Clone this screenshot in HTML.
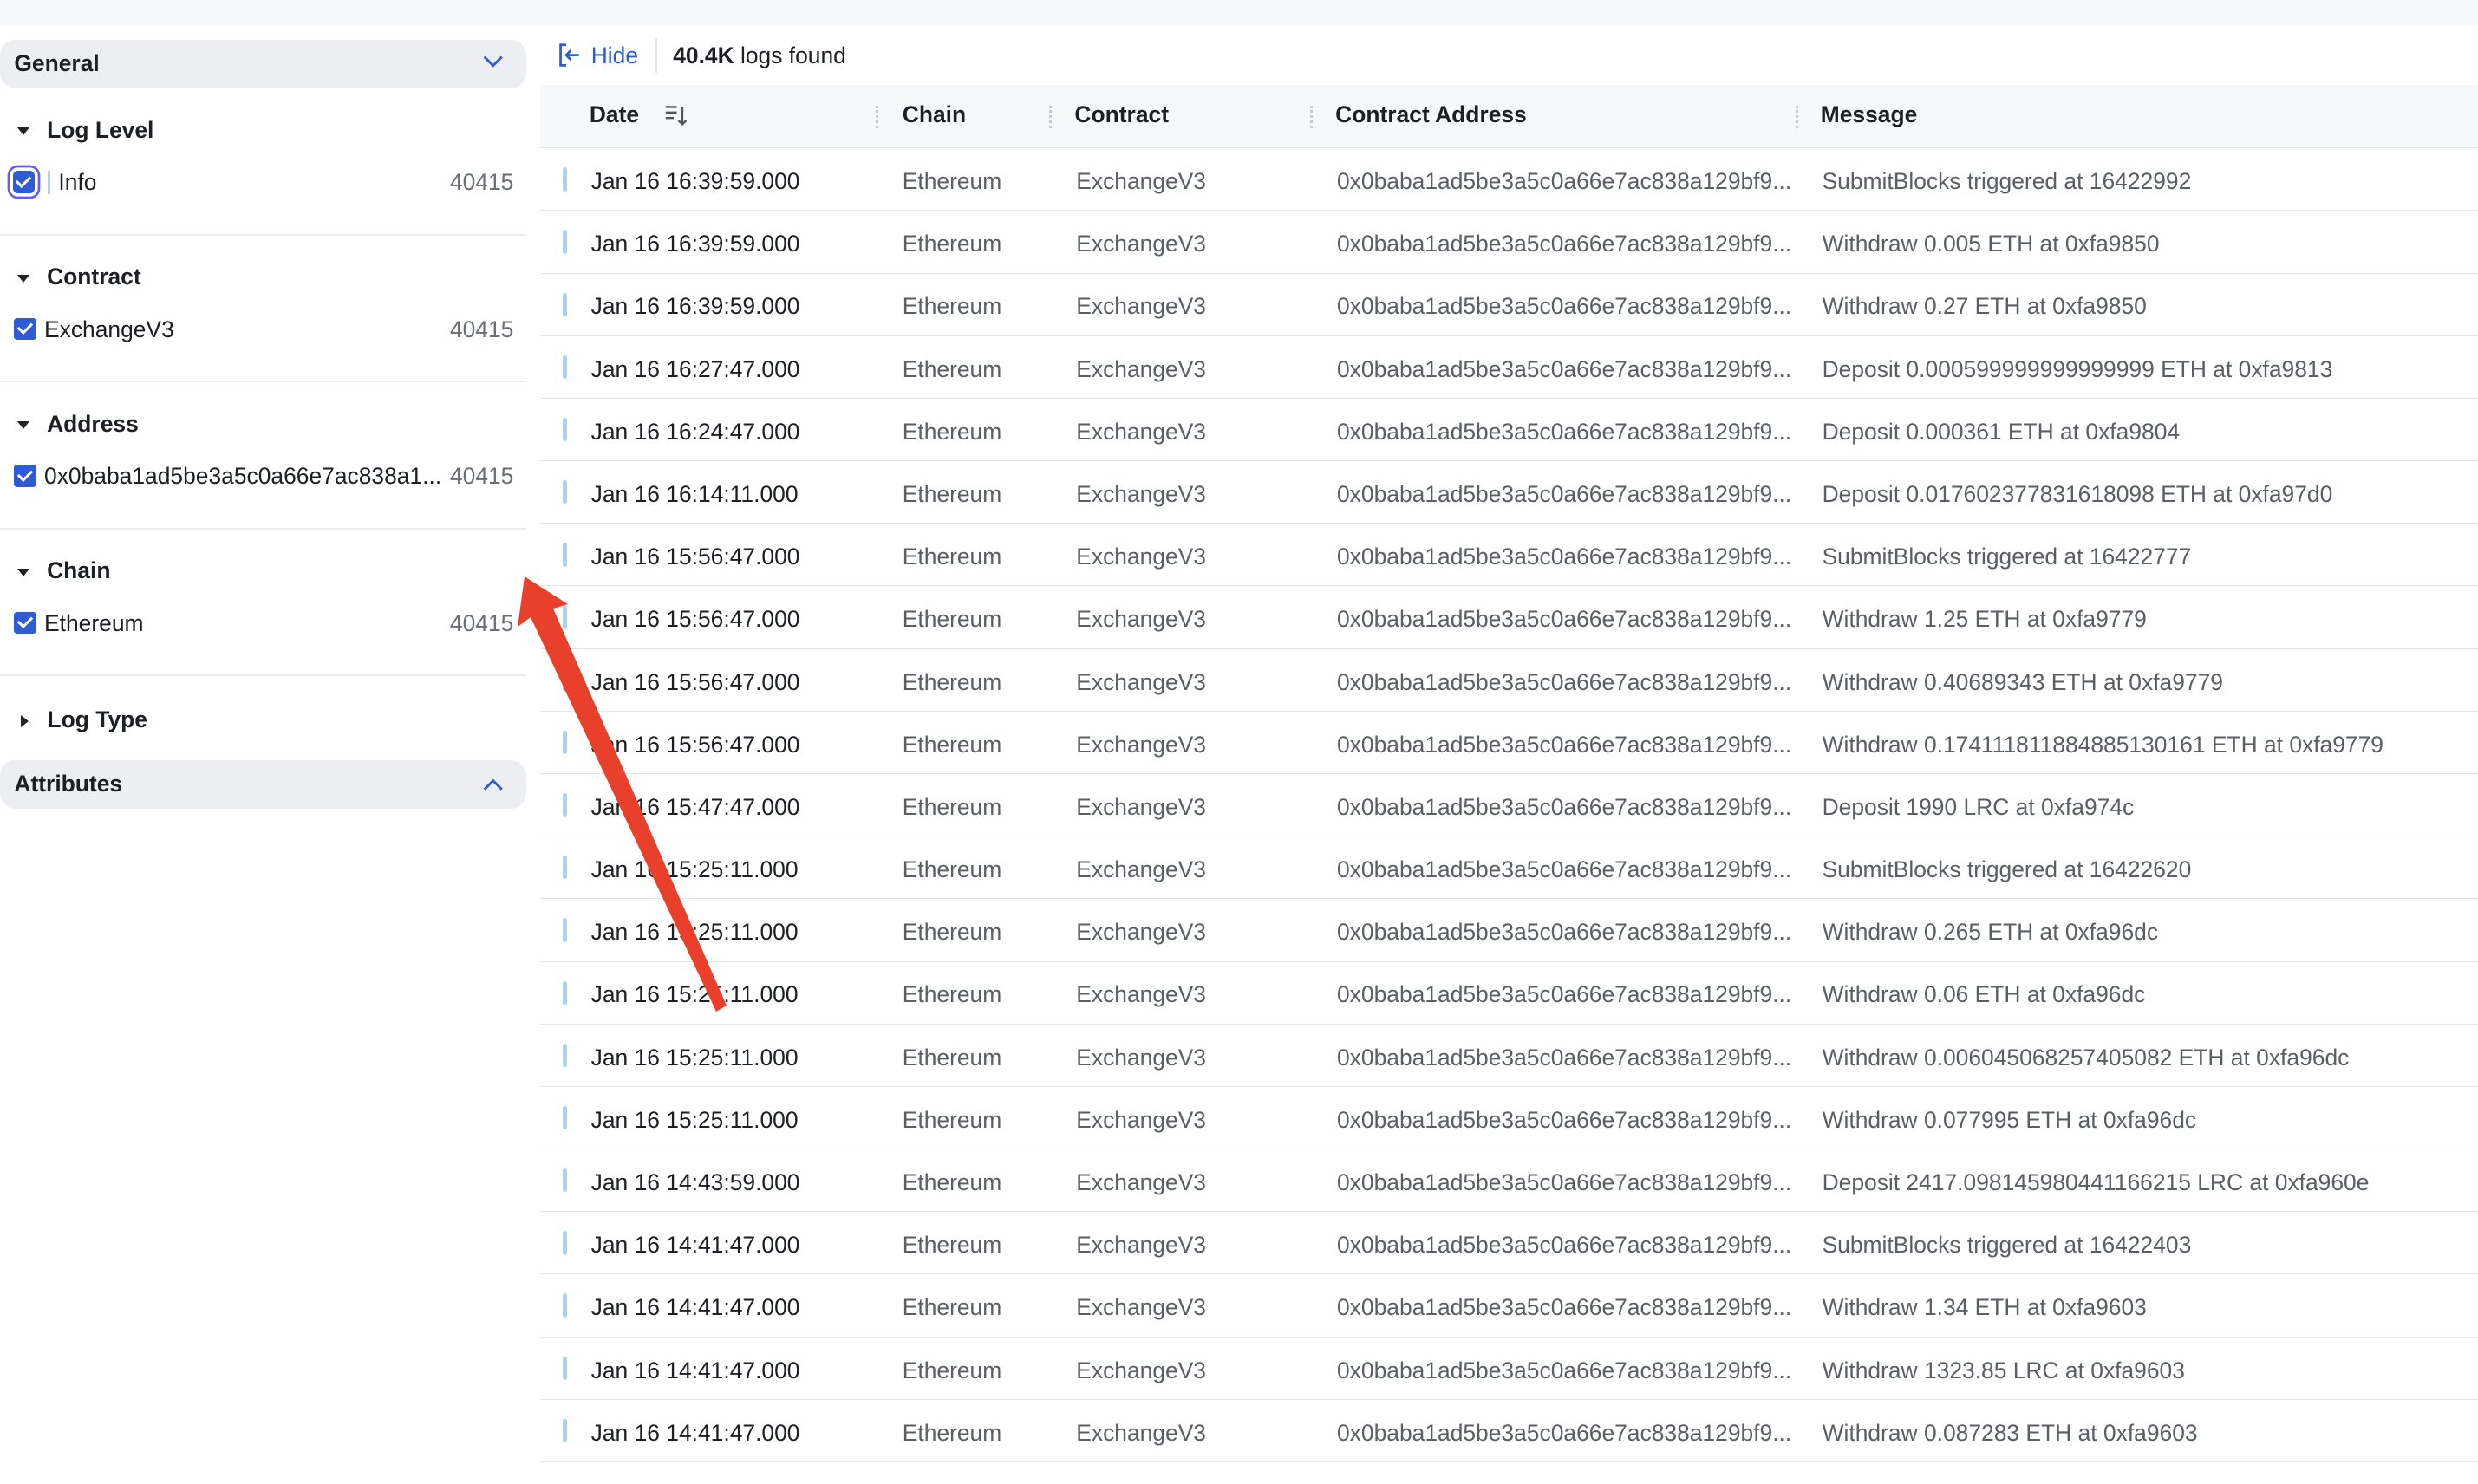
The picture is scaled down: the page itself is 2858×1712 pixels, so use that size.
<!DOCTYPE html>
<html><head><meta charset="utf-8"><style>
*{box-sizing:border-box;margin:0;padding:0}
html,body{width:2858px;height:1710px;overflow:hidden;background:#fff}
#w{position:absolute;left:0;top:0;width:1568px;height:939px;zoom:1.8227;font-family:"Liberation Sans",sans-serif;font-size:14px;color:#1d1f24}
.top{position:absolute;left:0;top:0;width:1568px;height:16px;background:#f7f8fa}
.side{position:absolute;left:0;top:0;width:334px}
.hdr{position:absolute;left:0;width:333px;height:31px;background:#eceef2;border-radius:10px;font-weight:bold;font-size:14.5px;padding:7px 9px}
.chev{position:absolute;right:14px;top:9px}
.sec{position:absolute;left:11px;font-size:14.5px;font-weight:bold;color:#1d1f24}
.sec .tri{display:inline-block;width:0;height:0;border-left:4px solid transparent;border-right:4px solid transparent;border-top:5px solid #222;margin-right:11px;vertical-align:middle}
.sec .tri.r{border-top:4px solid transparent;border-bottom:4px solid transparent;border-left:5px solid #222;border-right:0;margin-left:2px;margin-right:12px}
.item{position:absolute;left:9px;width:316px;font-size:14.5px}
.cb{display:inline-block;width:14px;height:14px;background:#2f5bd3;border-radius:2px;vertical-align:-2px;margin-right:5px;position:relative}
.cb:after{content:"";position:absolute;left:4px;top:1.5px;width:4px;height:7px;border:solid #fff;border-width:0 1.7px 1.7px 0;transform:rotate(45deg)}
.cnt{position:absolute;right:0;top:0;color:#6b6e75}
.div{position:absolute;left:0;width:333px;height:1px;background:#e8ebef}
.th{position:absolute;left:342px;top:54px;width:1226px;height:40px;background:#f7f8fa;border-bottom:1px solid #e3e6ea;font-weight:bold;font-size:14.5px}
.th span{position:absolute;top:10px}
.sep{position:absolute;top:13px;width:2px;height:14px;border-left:2px dotted #c5c8cd}
.row{position:absolute;left:342px;width:1226px;height:39.55px;border-bottom:1px solid #e3e6ea;font-size:14.5px}
.row span{position:absolute;top:12.5px;white-space:nowrap;color:#5b5e64}
.row .d{color:#1d1f24}
.bar{position:absolute;left:14px;top:12px;width:3px;height:15px;background:#a8d4f0;border-radius:2px}
</style></head><body><div id="w">
<div class="top"></div>
<div class="side">
<div class="hdr" style="top:25px">General<svg class="chev" width="14" height="10" viewBox="0 0 14 10"><path d="M1.5 2 L7 7.5 L12.5 2" fill="none" stroke="#2f5bd3" stroke-width="1.6"/></svg></div>
<div class="sec" style="top:74px"><i class="tri"></i>Log Level</div>
<div class="item" style="top:107px"><span class="cb" style="box-shadow:0 0 0 2px #fff,0 0 0 3.5px #6b5de6;border-radius:3px;margin-left:-1px"></span><span style="display:inline-block;width:2px;height:15px;background:#a8d4f0;vertical-align:-3px;margin:0 5px 0 3px"></span>Info<span class="cnt">40415</span></div>
<div class="div" style="top:148px"></div>
<div class="sec" style="top:167px"><i class="tri"></i>Contract</div>
<div class="item" style="top:200px"><span class="cb"></span>ExchangeV3<span class="cnt">40415</span></div>
<div class="div" style="top:241px"></div>
<div class="sec" style="top:260px"><i class="tri"></i>Address</div>
<div class="item" style="top:293px"><span class="cb"></span>0x0baba1ad5be3a5c0a66e7ac838a1...<span class="cnt" style="background:#fff">40415</span></div>
<div class="div" style="top:334px"></div>
<div class="sec" style="top:353px"><i class="tri"></i>Chain</div>
<div class="item" style="top:386px"><span class="cb"></span>Ethereum<span class="cnt">40415</span></div>
<div class="div" style="top:427px"></div>
<div class="sec" style="top:447px"><i class="tri r"></i>Log Type</div>
<div class="hdr" style="top:481px">Attributes<svg class="chev" width="14" height="10" viewBox="0 0 14 10" style="top:11px"><path d="M1.5 7.5 L7 2 L12.5 7.5" fill="none" stroke="#2f5bd3" stroke-width="1.6"/></svg></div>
</div>
<div style="position:absolute;left:352px;top:24px;font-size:14.5px;white-space:nowrap">
<svg width="16" height="16" viewBox="0 0 16 16" style="vertical-align:-3px"><path d="M6 1.5 H2.5 V14.5 H6 M6 8 H14 M9 5 L6 8 L9 11" fill="none" stroke="#2f5bd3" stroke-width="1.5"/></svg>
<span style="color:#2f5bd3;margin-left:2px">Hide</span>
<span style="display:inline-block;width:1px;height:22px;background:#e3e6ea;vertical-align:-6px;margin:0 6px 0 7px"></span>
<b>40.4K</b> logs found</div>
<div class="th">
<span style="left:31px">Date</span>
<svg style="position:absolute;left:78px;top:11px" width="16" height="16" viewBox="0 0 16 16"><path d="M1 3 H8 M1 6.5 H8 M1 10 H6 M11.5 3 V14 M9 11.5 L11.5 14 L14 11.5" fill="none" stroke="#555" stroke-width="1.3"/></svg>
<i class="sep" style="left:212px"></i><span style="left:229px">Chain</span>
<i class="sep" style="left:322px"></i><span style="left:338px">Contract</span>
<i class="sep" style="left:487px"></i><span style="left:503px">Contract Address</span>
<i class="sep" style="left:794px"></i><span style="left:810px">Message</span>
</div>
<div id="rows"></div>
</div>
<svg style="position:absolute;left:0;top:0" width="2858" height="1710"><polygon points="605,665 655,697 638,702 838,1160 826,1167 612,712 597,723" fill="#e8402a"/></svg>
<script>
var d=[["16:39:59","SubmitBlocks triggered at 16422992"],["16:39:59","Withdraw 0.005 ETH at 0xfa9850"],["16:39:59","Withdraw 0.27 ETH at 0xfa9850"],["16:27:47","Deposit 0.000599999999999999 ETH at 0xfa9813"],["16:24:47","Deposit 0.000361 ETH at 0xfa9804"],["16:14:11","Deposit 0.017602377831618098 ETH at 0xfa97d0"],["15:56:47","SubmitBlocks triggered at 16422777"],["15:56:47","Withdraw 1.25 ETH at 0xfa9779"],["15:56:47","Withdraw 0.40689343 ETH at 0xfa9779"],["15:56:47","Withdraw 0.174111811884885130161 ETH at 0xfa9779"],["15:47:47","Deposit 1990 LRC at 0xfa974c"],["15:25:11","SubmitBlocks triggered at 16422620"],["15:25:11","Withdraw 0.265 ETH at 0xfa96dc"],["15:25:11","Withdraw 0.06 ETH at 0xfa96dc"],["15:25:11","Withdraw 0.006045068257405082 ETH at 0xfa96dc"],["15:25:11","Withdraw 0.077995 ETH at 0xfa96dc"],["14:43:59","Deposit 2417.098145980441166215 LRC at 0xfa960e"],["14:41:47","SubmitBlocks triggered at 16422403"],["14:41:47","Withdraw 1.34 ETH at 0xfa9603"],["14:41:47","Withdraw 1323.85 LRC at 0xfa9603"],["14:41:47","Withdraw 0.087283 ETH at 0xfa9603"]];
var h="";for(var i=0;i<d.length;i++){h+='<div class="row" style="top:'+(94+i*39.6)+'px"><i class="bar"></i><span class="d" style="left:32px">Jan 16 '+d[i][0]+'.000</span><span style="left:229px">Ethereum</span><span style="left:339px">ExchangeV3</span><span style="left:504px">0x0baba1ad5be3a5c0a66e7ac838a129bf9...</span><span style="left:811px">'+d[i][1]+'</span></div>';}
document.getElementById("rows").innerHTML=h;
</script>
</body></html>
